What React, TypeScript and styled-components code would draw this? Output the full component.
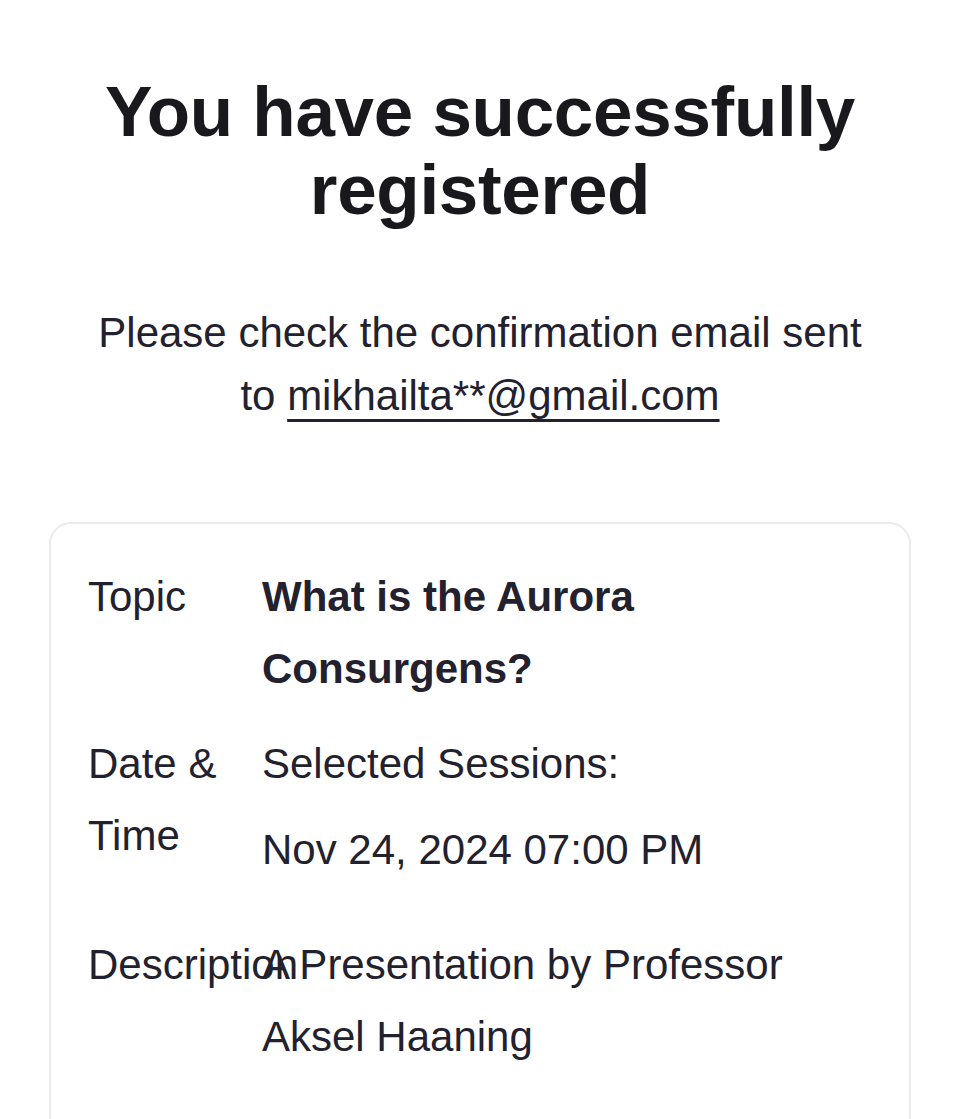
import React from 'react';
import styled, { createGlobalStyle } from 'styled-components';

const GlobalStyle = createGlobalStyle`
  html, body {
    margin: 0;
    padding: 0;
    background: #ffffff;
  }

  body {
    font-family: 'Liberation Sans', Arial, Helvetica, sans-serif;
    color: #22212d;
    -webkit-font-smoothing: antialiased;
  }
`;

const Page = styled.main`
  display: flex;
  flex-direction: column;
  align-items: center;
  padding: 73px 49px 0;
  box-sizing: border-box;
  width: 100%;
  min-height: 100vh;
  overflow: hidden;
`;

const Title = styled.h1`
  margin: 0;
  font-size: 71px;
  line-height: 78px;
  font-weight: 700;
  letter-spacing: -0.3px;
  color: #18181d;
  text-align: center;
`;

const Notice = styled.p`
  margin: 72px 0 0;
  font-size: 42px;
  line-height: 63px;
  color: #22212d;
  text-align: center;
  max-width: 800px;
`;

const EmailLink = styled.a`
  color: inherit;
  text-decoration: underline;
  text-decoration-thickness: 3px;
  text-underline-offset: 9px;
`;

const Card = styled.section`
  align-self: stretch;
  margin-top: 95px;
  border: 2px solid #ebebef;
  border-radius: 22px;
  padding: 37px 37px 70px;
  display: flex;
  flex-direction: column;
  gap: 23px;
`;

const Row = styled.div`
  display: grid;
  grid-template-columns: 174px 1fr;
  font-size: 42px;
  line-height: 72px;
`;

const Label = styled.div`
  min-width: 0;
  width: 174px;
`;

const NoWrapLabel = styled(Label)`
  white-space: nowrap;
`;

const Value = styled.div<{ $bold?: boolean }>`
  font-weight: ${p => (p.$bold ? 700 : 400)};
  color: #22212d;
`;

const SessionTime = styled.div`
  margin: 14px 0 20px;
`;

const App: React.FC = () => {
  return (
    <>
      <GlobalStyle />
      <Page>
        <Title>
          You have successfully
          <br />
          registered
        </Title>

        <Notice>
          Please check the confirmation email sent to{' '}
          <EmailLink href="#">mikhailta**@gmail.com</EmailLink>
        </Notice>

        <Card>
          <Row>
            <Label>Topic</Label>
            <Value $bold>What is the Aurora Consurgens?</Value>
          </Row>

          <Row>
            <Label>Date &amp; Time</Label>
            <Value>
              <div>Selected Sessions:</div>
              <SessionTime>Nov 24, 2024 07:00 PM</SessionTime>
            </Value>
          </Row>

          <Row>
            <NoWrapLabel>Description</NoWrapLabel>
            <Value>A Presentation by Professor Aksel Haaning</Value>
          </Row>
        </Card>
      </Page>
    </>
  );
};

export default App;
